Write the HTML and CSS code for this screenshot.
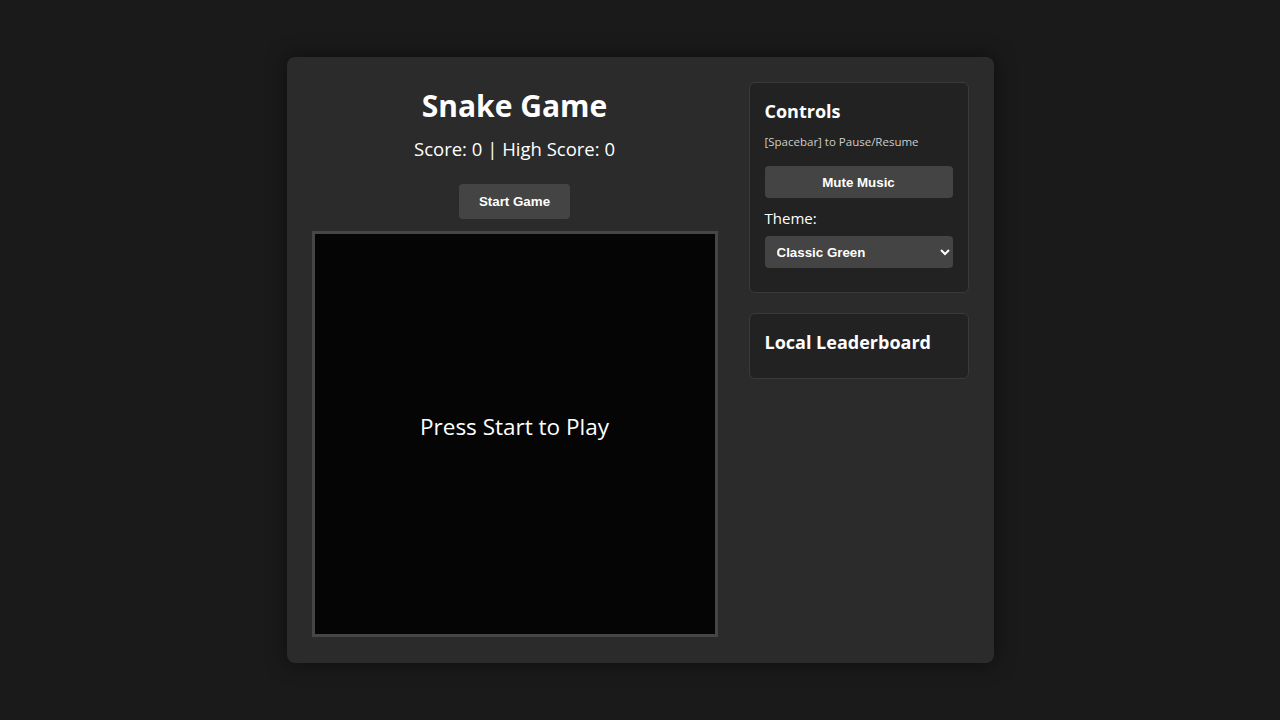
FILE: index.html
```html
<!DOCTYPE html>
<html lang="en">
  <head>
    <meta charset="UTF-8" />
    <meta name="viewport" content="width=device-width, initial-scale=1.0" />
    <title>Snake Game</title>
    <link rel="stylesheet" href="styles.css">
  </head>
  <body>
    <div class="game-container">
      <div class="game-main">
        <h1>Snake Game</h1>
        <div class="score">Score: <span id="score">0</span> | High Score: <span id="highScore">0</span></div>
        <button class="btn start-btn">Start Game</button>
        <div class="board">
          <p class="board-msg">Press Start to Play</p>
        </div>
      </div>
      <div class="sidebar">
        <div class="panel">
          <h3>Controls</h3>
          <p class="hint">[Spacebar] to Pause/Resume</p>
          <button class="btn wide-btn">Mute Music</button>
          <label class="theme-label" for="theme">Theme:</label>
          <select id="theme" class="theme-select">
            <option>Classic Green</option>
            <option>Neon Blue</option>
            <option>Retro Amber</option>
          </select>
        </div>
        <div class="panel leaderboard">
          <h3>Local Leaderboard</h3>
        </div>
      </div>
    </div>
  </body>
</html>
```

FILE: styles.css
```css
body {
  margin: 0;
  min-height: 100vh;
  background: #1a1a1a;
  color: #ffffff;
  font-family: 'Open Sans', 'Noto Sans', sans-serif;
  display: flex;
  justify-content: center;
  align-items: flex-start;
}

.game-container {
  margin-top: 57px;
  display: flex;
  gap: 31px;
  padding: 25px 25px 26px;
  background: #2b2b2b;
  border-radius: 8px;
  box-shadow: 0 0 20px rgba(0, 0, 0, 0.5);
}

.game-main {
  width: 406px;
  display: flex;
  flex-direction: column;
  align-items: center;
}

.game-main h1 {
  margin: 4px 0 0;
  font-size: 30px;
  line-height: 40px;
  font-weight: 700;
}

.score {
  margin-top: 10px;
  font-size: 18.5px;
  line-height: 26px;
}

.btn {
  font-family: 'Liberation Sans', Arial, sans-serif;
  font-weight: 700;
  font-size: 13.33px;
  color: #ffffff;
  background: #444444;
  border: none;
  border-radius: 4px;
  cursor: pointer;
}

.start-btn {
  margin-top: 22px;
  width: 111px;
  height: 35px;
}

.board {
  margin-top: 12px;
  width: 400px;
  height: 400px;
  background: #050505;
  border: 3px solid #464646;
  display: flex;
  justify-content: center;
  align-items: center;
}

.board-msg {
  margin: 0 0 16px;
  font-size: 22.5px;
  color: #ffffff;
}

.sidebar {
  width: 220px;
  display: flex;
  flex-direction: column;
  gap: 20px;
}

.panel {
  background: #222222;
  border: 1px solid #3a3a3a;
  border-radius: 6px;
  padding: 15px 15px 24px;
  display: flex;
  flex-direction: column;
}

.panel h3 {
  margin: 0;
  font-size: 18px;
  line-height: 26px;
  font-weight: 700;
}

.leaderboard {
  padding-bottom: 23px;
}

.hint {
  margin: 10px 0 0;
  font-size: 11.5px;
  color: #cccccc;
}

.wide-btn {
  margin-top: 17px;
  width: 100%;
  height: 32px;
}

.theme-label {
  margin-top: 9px;
  font-size: 15px;
  line-height: 22px;
}

.theme-select {
  margin-top: 7px;
  width: 100%;
  height: 32px;
  padding: 0 8px;
  font-family: 'Liberation Sans', Arial, sans-serif;
  font-weight: 700;
  font-size: 13.33px;
  color: #ffffff;
  background: #444444;
  border: none;
  border-radius: 4px;
}
```
